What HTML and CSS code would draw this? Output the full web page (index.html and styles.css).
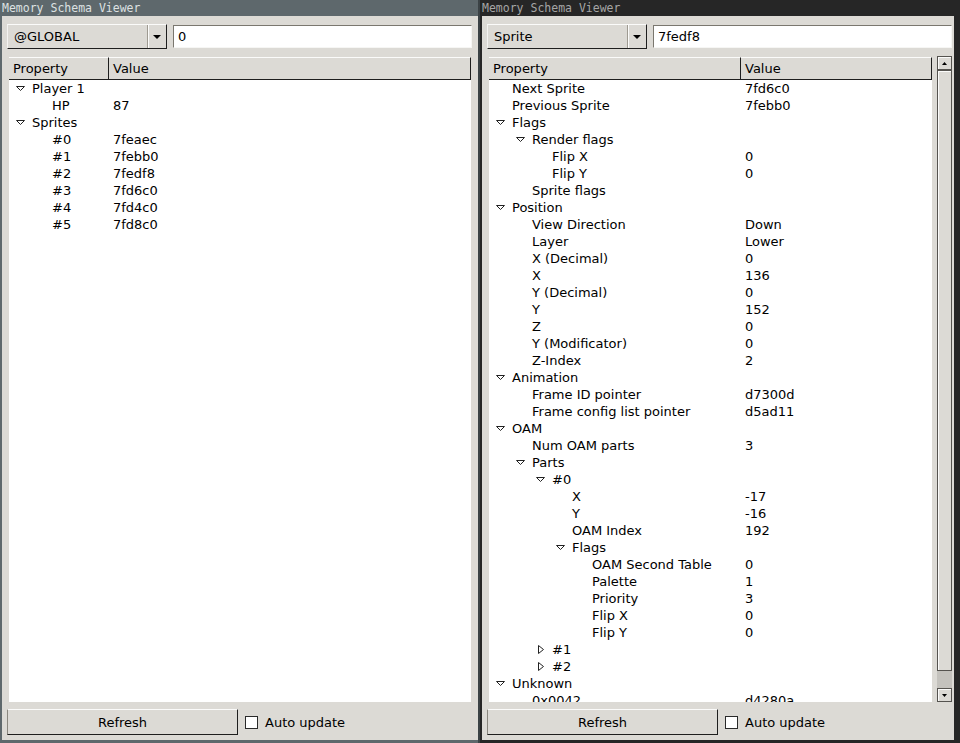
FILE: index.html
```html
<!DOCTYPE html>
<html>
<head>
<meta charset="utf-8">
<title>Memory Schema Viewer</title>
<link rel="stylesheet" href="styles.css">
</head>
<body>
<div class="desktop">
  <div class="window window-left">
    <div class="titlebar">Memory Schema Viewer</div>
    <div class="client">
      <div class="toolbar">
        <div class="combo"><span class="combo-text">@GLOBAL</span><span class="combo-btn"><svg width="8" height="4" viewBox="0 0 8 4"><path d="M0 0H8L4 4Z" fill="#000"/></svg></span></div>
        <div class="entry">0</div>
      </div>
      <div class="tree-area">
        <div class="tree">
          <div class="tree-header"><div class="th col-prop">Property</div><div class="th col-val">Value</div></div>
          <div class="tree-body">
            <div class="row"><div class="cell prop l0"><span class="ind"><svg width="9" height="5" viewBox="0 0 9 5"><path d="M0.5 0.5H8.5L4.5 4.5Z" fill="#fff" stroke="#222"/></svg></span>Player 1</div><div class="cell val"></div></div>
            <div class="row"><div class="cell prop l1"><span class="ind"></span>HP</div><div class="cell val">87</div></div>
            <div class="row"><div class="cell prop l0"><span class="ind"><svg width="9" height="5" viewBox="0 0 9 5"><path d="M0.5 0.5H8.5L4.5 4.5Z" fill="#fff" stroke="#222"/></svg></span>Sprites</div><div class="cell val"></div></div>
            <div class="row"><div class="cell prop l1"><span class="ind"></span>#0</div><div class="cell val">7feaec</div></div>
            <div class="row"><div class="cell prop l1"><span class="ind"></span>#1</div><div class="cell val">7febb0</div></div>
            <div class="row"><div class="cell prop l1"><span class="ind"></span>#2</div><div class="cell val">7fedf8</div></div>
            <div class="row"><div class="cell prop l1"><span class="ind"></span>#3</div><div class="cell val">7fd6c0</div></div>
            <div class="row"><div class="cell prop l1"><span class="ind"></span>#4</div><div class="cell val">7fd4c0</div></div>
            <div class="row"><div class="cell prop l1"><span class="ind"></span>#5</div><div class="cell val">7fd8c0</div></div>
          </div>
        </div>
      </div>
      <div class="bottom">
        <div class="button">Refresh</div>
        <div class="check"><span class="box"></span>Auto update</div>
      </div>
    </div>
  </div>

  <div class="window window-right">
    <div class="titlebar">Memory Schema Viewer</div>
    <div class="client">
      <div class="toolbar">
        <div class="combo"><span class="combo-text">Sprite</span><span class="combo-btn"><svg width="8" height="4" viewBox="0 0 8 4"><path d="M0 0H8L4 4Z" fill="#000"/></svg></span></div>
        <div class="entry">7fedf8</div>
      </div>
      <div class="tree-area">
        <div class="tree">
          <div class="tree-header"><div class="th col-prop">Property</div><div class="th col-val">Value</div></div>
          <div class="tree-body">
            <div class="row"><div class="cell prop l0"><span class="ind"></span>Next Sprite</div><div class="cell val">7fd6c0</div></div>
            <div class="row"><div class="cell prop l0"><span class="ind"></span>Previous Sprite</div><div class="cell val">7febb0</div></div>
            <div class="row"><div class="cell prop l0"><span class="ind"><svg width="9" height="5" viewBox="0 0 9 5"><path d="M0.5 0.5H8.5L4.5 4.5Z" fill="#fff" stroke="#222"/></svg></span>Flags</div><div class="cell val"></div></div>
            <div class="row"><div class="cell prop l1"><span class="ind"><svg width="9" height="5" viewBox="0 0 9 5"><path d="M0.5 0.5H8.5L4.5 4.5Z" fill="#fff" stroke="#222"/></svg></span>Render flags</div><div class="cell val"></div></div>
            <div class="row"><div class="cell prop l2"><span class="ind"></span>Flip X</div><div class="cell val">0</div></div>
            <div class="row"><div class="cell prop l2"><span class="ind"></span>Flip Y</div><div class="cell val">0</div></div>
            <div class="row"><div class="cell prop l1"><span class="ind"></span>Sprite flags</div><div class="cell val"></div></div>
            <div class="row"><div class="cell prop l0"><span class="ind"><svg width="9" height="5" viewBox="0 0 9 5"><path d="M0.5 0.5H8.5L4.5 4.5Z" fill="#fff" stroke="#222"/></svg></span>Position</div><div class="cell val"></div></div>
            <div class="row"><div class="cell prop l1"><span class="ind"></span>View Direction</div><div class="cell val">Down</div></div>
            <div class="row"><div class="cell prop l1"><span class="ind"></span>Layer</div><div class="cell val">Lower</div></div>
            <div class="row"><div class="cell prop l1"><span class="ind"></span>X (Decimal)</div><div class="cell val">0</div></div>
            <div class="row"><div class="cell prop l1"><span class="ind"></span>X</div><div class="cell val">136</div></div>
            <div class="row"><div class="cell prop l1"><span class="ind"></span>Y (Decimal)</div><div class="cell val">0</div></div>
            <div class="row"><div class="cell prop l1"><span class="ind"></span>Y</div><div class="cell val">152</div></div>
            <div class="row"><div class="cell prop l1"><span class="ind"></span>Z</div><div class="cell val">0</div></div>
            <div class="row"><div class="cell prop l1"><span class="ind"></span>Y (Modificator)</div><div class="cell val">0</div></div>
            <div class="row"><div class="cell prop l1"><span class="ind"></span>Z-Index</div><div class="cell val">2</div></div>
            <div class="row"><div class="cell prop l0"><span class="ind"><svg width="9" height="5" viewBox="0 0 9 5"><path d="M0.5 0.5H8.5L4.5 4.5Z" fill="#fff" stroke="#222"/></svg></span>Animation</div><div class="cell val"></div></div>
            <div class="row"><div class="cell prop l1"><span class="ind"></span>Frame ID pointer</div><div class="cell val">d7300d</div></div>
            <div class="row"><div class="cell prop l1"><span class="ind"></span>Frame config list pointer</div><div class="cell val">d5ad11</div></div>
            <div class="row"><div class="cell prop l0"><span class="ind"><svg width="9" height="5" viewBox="0 0 9 5"><path d="M0.5 0.5H8.5L4.5 4.5Z" fill="#fff" stroke="#222"/></svg></span>OAM</div><div class="cell val"></div></div>
            <div class="row"><div class="cell prop l1"><span class="ind"></span>Num OAM parts</div><div class="cell val">3</div></div>
            <div class="row"><div class="cell prop l1"><span class="ind"><svg width="9" height="5" viewBox="0 0 9 5"><path d="M0.5 0.5H8.5L4.5 4.5Z" fill="#fff" stroke="#222"/></svg></span>Parts</div><div class="cell val"></div></div>
            <div class="row"><div class="cell prop l2"><span class="ind"><svg width="9" height="5" viewBox="0 0 9 5"><path d="M0.5 0.5H8.5L4.5 4.5Z" fill="#fff" stroke="#222"/></svg></span>#0</div><div class="cell val"></div></div>
            <div class="row"><div class="cell prop l3"><span class="ind"></span>X</div><div class="cell val">-17</div></div>
            <div class="row"><div class="cell prop l3"><span class="ind"></span>Y</div><div class="cell val">-16</div></div>
            <div class="row"><div class="cell prop l3"><span class="ind"></span>OAM Index</div><div class="cell val">192</div></div>
            <div class="row"><div class="cell prop l3"><span class="ind"><svg width="9" height="5" viewBox="0 0 9 5"><path d="M0.5 0.5H8.5L4.5 4.5Z" fill="#fff" stroke="#222"/></svg></span>Flags</div><div class="cell val"></div></div>
            <div class="row"><div class="cell prop l4"><span class="ind"></span>OAM Second Table</div><div class="cell val">0</div></div>
            <div class="row"><div class="cell prop l4"><span class="ind"></span>Palette</div><div class="cell val">1</div></div>
            <div class="row"><div class="cell prop l4"><span class="ind"></span>Priority</div><div class="cell val">3</div></div>
            <div class="row"><div class="cell prop l4"><span class="ind"></span>Flip X</div><div class="cell val">0</div></div>
            <div class="row"><div class="cell prop l4"><span class="ind"></span>Flip Y</div><div class="cell val">0</div></div>
            <div class="row"><div class="cell prop l2"><span class="ind"><svg width="6" height="9" viewBox="0 0 6 9"><path d="M0.5 0.5L5.5 4.5L0.5 8.5Z" fill="#fff" stroke="#222"/></svg></span>#1</div><div class="cell val"></div></div>
            <div class="row"><div class="cell prop l2"><span class="ind"><svg width="6" height="9" viewBox="0 0 6 9"><path d="M0.5 0.5L5.5 4.5L0.5 8.5Z" fill="#fff" stroke="#222"/></svg></span>#2</div><div class="cell val"></div></div>
            <div class="row"><div class="cell prop l0"><span class="ind"><svg width="9" height="5" viewBox="0 0 9 5"><path d="M0.5 0.5H8.5L4.5 4.5Z" fill="#fff" stroke="#222"/></svg></span>Unknown</div><div class="cell val"></div></div>
            <div class="row"><div class="cell prop l1"><span class="ind"></span>0x0042</div><div class="cell val">d4280a</div></div>
          </div>
        </div>
        <div class="scrollbar">
          <div class="sb-btn"><svg width="5" height="3" viewBox="0 0 5 3"><path d="M2.5 0L5 3H0Z" fill="#000"/></svg></div>
          <div class="sb-thumb"></div>
          <div class="sb-trough"></div>
          <div class="sb-btn"><svg width="5" height="3" viewBox="0 0 5 3"><path d="M0 0H5L2.5 3Z" fill="#000"/></svg></div>
        </div>
      </div>
      <div class="bottom">
        <div class="button">Refresh</div>
        <div class="check"><span class="box"></span>Auto update</div>
      </div>
    </div>
  </div>
</div>
</body>
</html>
```

FILE: styles.css
```css
* { box-sizing: border-box; }
html, body { margin: 0; padding: 0; }
body {
  width: 960px;
  height: 743px;
  overflow: hidden;
  font-family: "DejaVu Sans", sans-serif;
  font-size: 13px;
  color: #000;
  background: #262626;
}
.desktop { display: flex; height: 743px; }
.window { width: 480px; height: 743px; display: flex; flex-direction: column; }
.window-left {
  background: #5e686c;
  padding: 0 0 3px 2px;
  border-right: 2px solid #3b4245;
}
.window-right {
  background: #262626;
  padding: 0 6px 3px 2px;
}
.titlebar {
  height: 16px;
  font-family: "DejaVu Sans Mono", monospace;
  font-size: 11.5px;
  line-height: 16px;
  white-space: nowrap;
  overflow: hidden;
}
.window-left .titlebar { color: #dde1e2; }
.window-right .titlebar { color: #a5a5a5; }
.client {
  flex: 1;
  min-height: 0;
  background: #dcdad5;
  padding: 8px 6px 5px 5px;
  display: flex;
  flex-direction: column;
}
.window-right .client { padding-right: 2px; }

.toolbar { display: flex; align-items: center; height: 25px; flex: none; }
.combo {
  width: 160px;
  height: 25px;
  display: flex;
  background: #dcdad5;
  border: 1px solid;
  border-color: #fbfbfa #1e1e1e #1e1e1e #f4f3f1;
}
.combo-text { flex: 1; padding-left: 6px; line-height: 23px; }
.combo-btn {
  width: 19px;
  display: flex;
  align-items: center;
  justify-content: center;
  border-left: 1px solid #9e9a91;
  box-shadow: inset 1px 0 #fbfbfa;
}
.entry {
  flex: 1;
  margin-left: 6px;
  height: 23px;
  background: #fff;
  border: 1px solid;
  border-color: #7a776f #f6f6f4 #f6f6f4 #7a776f;
  padding-left: 4px;
  line-height: 21px;
}

.tree-area { flex: 1; min-height: 0; display: flex; margin-top: 8px; }
.tree {
  flex: 1;
  min-width: 0;
  display: flex;
  flex-direction: column;
  margin-left: 2px;
  background: #fff;
}
.window-left .tree { margin-right: 1px; }
.tree-header { display: flex; height: 23px; flex: none; background: #dcdad5; }
.th {
  border-top: 1px solid #fbfbfa;
  border-right: 1px solid #1e1e1e;
  border-bottom: 1px solid #1e1e1e;
  padding-left: 4px;
  line-height: 21px;
  white-space: nowrap;
}
.col-prop, .cell.prop { flex: none; }
.window-left .col-prop, .window-left .cell.prop { width: 100px; }
.window-right .col-prop, .window-right .cell.prop { width: 252px; }
.th.col-val, .cell.val { flex: 1; }
.tree-body { flex: 1; overflow: hidden; }
.row { display: flex; height: 17px; line-height: 17px; white-space: nowrap; }
.cell.prop { display: flex; align-items: center; overflow: hidden; }
.cell.val { padding-left: 4px; }
.ind {
  width: 9px;
  height: 17px;
  flex: none;
  display: flex;
  align-items: center;
  justify-content: center;
  margin-right: 7px;
}
.ind svg { display: block; }
.l0 { padding-left: 7px; }
.l1 { padding-left: 27px; }
.l2 { padding-left: 47px; }
.l3 { padding-left: 67px; }
.l4 { padding-left: 87px; }

.scrollbar {
  width: 15px;
  flex: none;
  margin-left: 5px;
  margin-top: -1px;
  display: flex;
  flex-direction: column;
  background: #c4c2bd;
}
.sb-btn {
  height: 14px;
  flex: none;
  display: flex;
  align-items: center;
  justify-content: center;
  background: #dcdad5;
  border: 1px solid #55534f;
  box-shadow: inset 1px 1px #fbfbfa;
}
.sb-btn svg { display: block; }
.sb-thumb {
  height: 601px;
  flex: none;
  background: #dcdad5;
  border: 1px solid #55534f;
  box-shadow: inset 1px 1px #fbfbfa;
}
.sb-trough { flex: 1; }

.bottom { display: flex; align-items: center; margin-top: 7px; height: 26px; flex: none; }
.button {
  width: 231px;
  height: 26px;
  background: #dcdad5;
  border: 1px solid;
  border-color: #fbfbfa #1e1e1e #1e1e1e #8a877f;
  text-align: center;
  line-height: 25px;
}
.check { display: flex; align-items: center; margin-left: 7px; }
.box {
  width: 13px;
  height: 13px;
  background: #fff;
  border: 1px solid #2a2a2a;
  margin-right: 7px;
}
```
